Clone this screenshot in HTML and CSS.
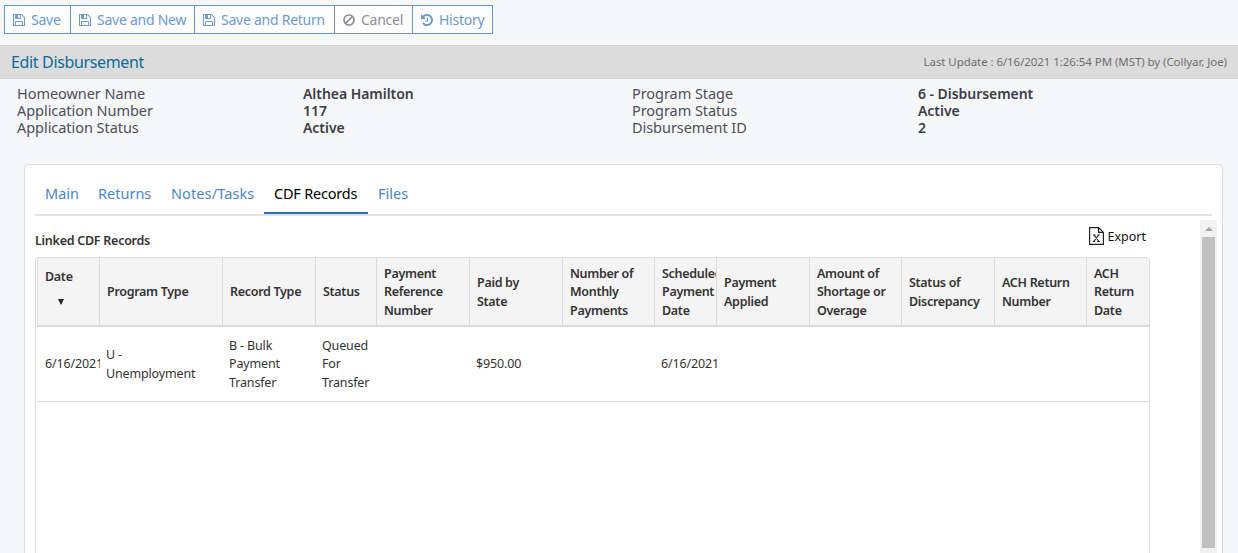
FILE: index.html
```
<!DOCTYPE html>
<html lang="en">
<head>
  <meta charset="UTF-8">
  <meta name="viewport" content="width=device-width, initial-scale=1">
  <title>Edit Disbursement</title>
  <link rel="stylesheet" href="styles.css">
</head>
<body>
  <svg class="sprite" xmlns="http://www.w3.org/2000/svg">
    <symbol id="save" viewBox="1 1 12 12">
      <path d="M4 12h6v-3h-6v3zM11 12h1v-7q0-0.11-0.078-0.301t-0.156-0.27l-2.195-2.195q-0.078-0.078-0.266-0.156t-0.305-0.078v3.25q0 0.313-0.219 0.531t-0.531 0.219h-4.5q-0.313 0-0.531-0.219t-0.219-0.531v-3.25h-1v10h1v-3.25q0-0.313 0.219-0.531t0.531-0.219h6.5q0.313 0 0.531 0.219t0.219 0.531v3.25zM8 4.75v-2.5q0-0.102-0.074-0.176t-0.176-0.074h-1.5q-0.102 0-0.176 0.074t-0.074 0.176v2.5q0 0.102 0.074 0.176t0.176 0.074h1.5q0.102 0 0.176-0.074t0.074-0.176zM13 5v7.25q0 0.313-0.219 0.531t-0.531 0.219h-10.5q-0.313 0-0.531-0.219t-0.219-0.531v-10.5q0-0.313 0.219-0.531t0.531-0.219h7.25q0.313 0 0.688 0.156t0.594 0.375l2.188 2.188q0.219 0.219 0.375 0.594t0.156 0.688z"/>
    </symbol>
  </svg>

  <div class="toolbar">
    <button class="btn save"><svg class="icon"><use href="#save"/></svg>Save</button>
    <button class="btn save-new"><svg class="icon"><use href="#save"/></svg>Save and New</button>
    <button class="btn save-return"><svg class="icon"><use href="#save"/></svg>Save and Return</button>
    <button class="btn cancel">
      <svg class="icon" viewBox="0 0 12 12"><g fill="none" stroke="currentColor" stroke-width="1.7"><circle cx="6" cy="6" r="5"/><path d="M2.5 9.5l7-7"/></g></svg>Cancel</button>
    <button class="btn history">
      <svg class="icon" viewBox="1 1 12 12"><path d="M13 7q0 1.219-0.477 2.328t-1.281 1.914-1.914 1.281-2.328 0.477q-1.344 0-2.555-0.566t-2.063-1.598q-0.047-0.070-0.043-0.16t0.059-0.145l1.070-1.078q0.078-0.070 0.195-0.070 0.125 0.016 0.18 0.094 0.57 0.742 1.398 1.148t1.758 0.406q0.813 0 1.551-0.316t1.277-0.855 0.855-1.277 0.316-1.551-0.316-1.551-0.855-1.277-1.277-0.855-1.551-0.316q-0.766 0-1.469 0.277t-1.25 0.793l1.070 1.078q0.242 0.234 0.109 0.539-0.133 0.313-0.461 0.313h-3.5q-0.203 0-0.352-0.148t-0.148-0.352v-3.5q0-0.328 0.313-0.461 0.305-0.133 0.539 0.109l1.016 1.008q0.836-0.789 1.91-1.223t2.223-0.434q1.219 0 2.328 0.477t1.914 1.281 1.281 1.914 0.477 2.328zM8 4.75v3.5q0 0.109-0.070 0.18t-0.18 0.070h-2.5q-0.109 0-0.18-0.070t-0.070-0.18v-0.5q0-0.109 0.070-0.18t0.18-0.070h1.75v-2.75q0-0.109 0.070-0.18t0.18-0.070h0.5q0.109 0 0.18 0.070t0.070 0.18z"/></svg>History</button>
  </div>

  <div class="titlebar">
    <h1>Edit Disbursement</h1>
    <span class="updated">Last Update : 6/16/2021 1:26:54 PM (MST) by (Collyar, Joe)</span>
  </div>

  <div class="info">
    <span>Homeowner Name</span><b>Althea Hamilton</b><span>Program Stage</span><b>6 - Disbursement</b>
    <span>Application Number</span><b>117</b><span>Program Status</span><b>Active</b>
    <span>Application Status</span><b>Active</b><span>Disbursement ID</span><b>2</b>
  </div>

  <div class="card">
    <nav class="tabs">
      <a class="tab main">Main</a>
      <a class="tab returns">Returns</a>
      <a class="tab notes">Notes/Tasks</a>
      <a class="tab cdf active">CDF Records</a>
      <a class="tab files">Files</a>
    </nav>

    <div class="pane">
      <div class="content">
        <div class="heading">
          <h2>Linked CDF Records</h2>
          <a class="export">
            <svg width="15" height="18" viewBox="0 0 15 18" fill="none" stroke="#222" stroke-width="1.2">
              <path d="M.6 .6h9l4.800 4.800v11.900H.6zM9.600 .6v4.800h4.800"/>
              <path d="M5 8l5 6.500M9.800 8l-5 6.500M4 8h2.500M8.500 8h2.300M3.900 14.500h2.300M8.300 14.500h2.700"/>
            </svg>Export</a>
        </div>
        <div class="grid">
          <table>
            <colgroup>
              <col class="w63"><col class="w123"><col class="w93"><col class="w61"><col class="w93"><col class="w93"><col class="w92"><col class="w62"><col class="w93"><col class="w92"><col class="w93"><col class="w92"><col class="w62">
            </colgroup>
            <thead>
              <tr>
                <th class="sorted">Date<br><span class="sort"></span></th>
                <th>Program Type</th>
                <th>Record Type</th>
                <th>Status</th>
                <th>Payment Reference Number</th>
                <th>Paid by<br>State</th>
                <th>Number of Monthly Payments</th>
                <th>Scheduled Payment Date</th>
                <th>Payment Applied</th>
                <th>Amount of<br>Shortage&nbsp;or Overage</th>
                <th>Status of Discrepancy</th>
                <th>ACH&nbsp;Return Number</th>
                <th>ACH Return Date</th>
              </tr>
            </thead>
            <tbody>
              <tr>
                <td class="first">6/16/2021</td>
                <td>U -<br>Unemployment</td>
                <td>B - Bulk Payment Transfer</td>
                <td>Queued For Transfer</td>
                <td></td>
                <td>$950.00</td>
                <td></td>
                <td>6/16/2021</td>
                <td></td>
                <td></td>
                <td></td>
                <td></td>
                <td></td>
              </tr>
            </tbody>
          </table>
        </div>
      </div>
      <div class="scrollbar">
        <span class="arrow"></span>
        <span class="thumb"></span>
      </div>
    </div>
  </div>
</body>
</html>
```
FILE: styles.css
```
* {
  box-sizing: border-box;
}
body {
  margin: 0;
  height: 553px;
  overflow: hidden;
  display: flex;
  flex-direction: column;
  background: #f5f7f9;
  font-family: "Noto Sans", sans-serif;
}
.sprite {
  display: none;
}

/* toolbar */
.toolbar {
  display: flex;
  flex: none;
  height: 45px;
  padding: 5px 4px 0;
}
.btn {
  display: flex;
  align-items: center;
  height: 29px;
  margin: 0 -1px 0 0;
  padding: 0 0 0 8px;
  border: 1px solid #6296cd;
  background: #fff;
  color: #6a9ace;
  font: 14px "Noto Sans", sans-serif;
  letter-spacing: -0.25px;
  white-space: nowrap;
}
.icon {
  width: 12px;
  height: 12px;
  margin: 1px 6px 0 0;
  fill: currentColor;
}
.save { width: 67px; }
.save-new { width: 125px; }
.save-return { width: 141px; }
.cancel {
  width: 79px;
  border-color: #8c8c9f;
  color: #8c8c9f;
}
.history { width: 81px; }

/* title */
.titlebar {
  display: flex;
  flex: none;
  align-items: center;
  justify-content: space-between;
  height: 34px;
  padding: 0 11px 1px;
  background: #dcdcdc;
  border-top: 1px solid #d0d0d0;
  border-bottom: 1px solid #d0d0d0;
}
h1 {
  margin: 0;
  color: #0c6b9b;
  font-size: 16px;
  font-weight: 400;
  letter-spacing: -0.35px;
}
.updated {
  color: #6f6f6f;
  font-size: 11.5px;
  letter-spacing: -0.07px;
}

.info {
  display: grid;
  flex: none;
  grid-template-columns: 286px 329px 286px 1fr;
  grid-auto-rows: 17px;
  height: 85px;
  padding: 6px 0 0 17px;
  color: #4e4e5a;
  font-size: 14.5px;
  line-height: 17px;
  letter-spacing: -0.05px;
}
.info b {
  color: #3c3c48;
  font-size: 14px;
  font-weight: 600;
}

/* card and tabs */
.card {
  flex: 1;
  min-height: 0;
  display: flex;
  flex-direction: column;
  width: 1199px;
  margin-left: 24px;
  padding: 10px 5px 0 10px;
  background: #fff;
  border: 1px solid #dcdde0;
  border-bottom: 0;
  border-radius: 5px 5px 0 0;
}
.tabs {
  display: flex;
  flex: none;
  width: 1177px;
  height: 41px;
  border-bottom: 2px solid #e3e3e3;
}
.tab {
  height: 39px;
  padding-left: 10px;
  color: #4a86c5;
  font-size: 14.5px;
  line-height: 36px;
  white-space: nowrap;
}
.main { width: 53px; }
.returns { width: 73px; }
.notes {
  width: 103px;
  letter-spacing: 0.1px;
}
.cdf {
  width: 104px;
  letter-spacing: -0.2px;
}
.files { width: 51px; }
.tab.active {
  color: #000;
  border-bottom: 2px solid #2e6fb3;
}

.pane {
  display: flex;
  flex: 1;
  min-height: 0;
  justify-content: space-between;
  margin-top: 4px;
}
.content {
  display: flex;
  flex-direction: column;
  width: 1115px;
}
.heading {
  display: flex;
  flex: none;
  justify-content: space-between;
  height: 37px;
  padding: 7px 4px 0 0;
}
h2 {
  margin: 5px 0 0;
  color: #333;
  font-size: 12.5px;
  font-weight: 600;
  line-height: 17px;
  letter-spacing: -0.26px;
}
.export {
  display: flex;
  align-items: center;
  gap: 4px;
  height: 18px;
  color: #111;
  font-size: 12.5px;
}

/* records table */
.grid {
  flex: 1;
  border: 1px solid #dbdbdb;
  border-bottom: 0;
  border-radius: 4px 4px 0 0;
  overflow: hidden;
}
table {
  width: 1112px;
  margin-left: 1px;
  table-layout: fixed;
  border-collapse: separate;
  border-spacing: 0;
  color: #333;
  font-size: 12.5px;
  line-height: 18.6px;
}
.w61 { width: 61px; }
.w62 { width: 62px; }
.w63 { width: 63px; }
.w92 { width: 92px; }
.w93 { width: 93px; }
.w123 { width: 123px; }
th {
  height: 69px;
  padding: 2px 0 0 7px;
  background: #f4f4f4;
  border-right: 1px solid #dbdbdb;
  border-bottom: 2px solid #dbdbdb;
  font-weight: 600;
  letter-spacing: -0.3px;
  text-align: left;
  overflow: hidden;
}
th.sorted {
  padding: 0 0 6px 7px;
  border-left: 1px solid #dbdbdb;
}
th:last-child {
  border-right: 0;
}
.sort {
  display: block;
  width: 0;
  margin: 12px 0 4px 13px;
  border: 3.5px solid transparent;
  border-top: 6px solid #222;
  border-bottom: 0;
}
td {
  height: 75px;
  padding: 1px 0 0 6px;
  border-bottom: 1px solid #dbdbdb;
  letter-spacing: -0.15px;
  overflow: hidden;
}
td.first {
  padding-left: 8px;
}

.scrollbar {
  width: 17px;
  background: #f1f1f1;
}
.arrow {
  display: block;
  width: 0;
  margin: 7px 0 6px 5px;
  border: 4px solid transparent;
  border-top: 0;
  border-bottom: 4px solid #a3a3a3;
}
.thumb {
  display: block;
  width: 13px;
  height: 311px;
  margin-left: 2px;
  background: #c1c1c1;
}
```
